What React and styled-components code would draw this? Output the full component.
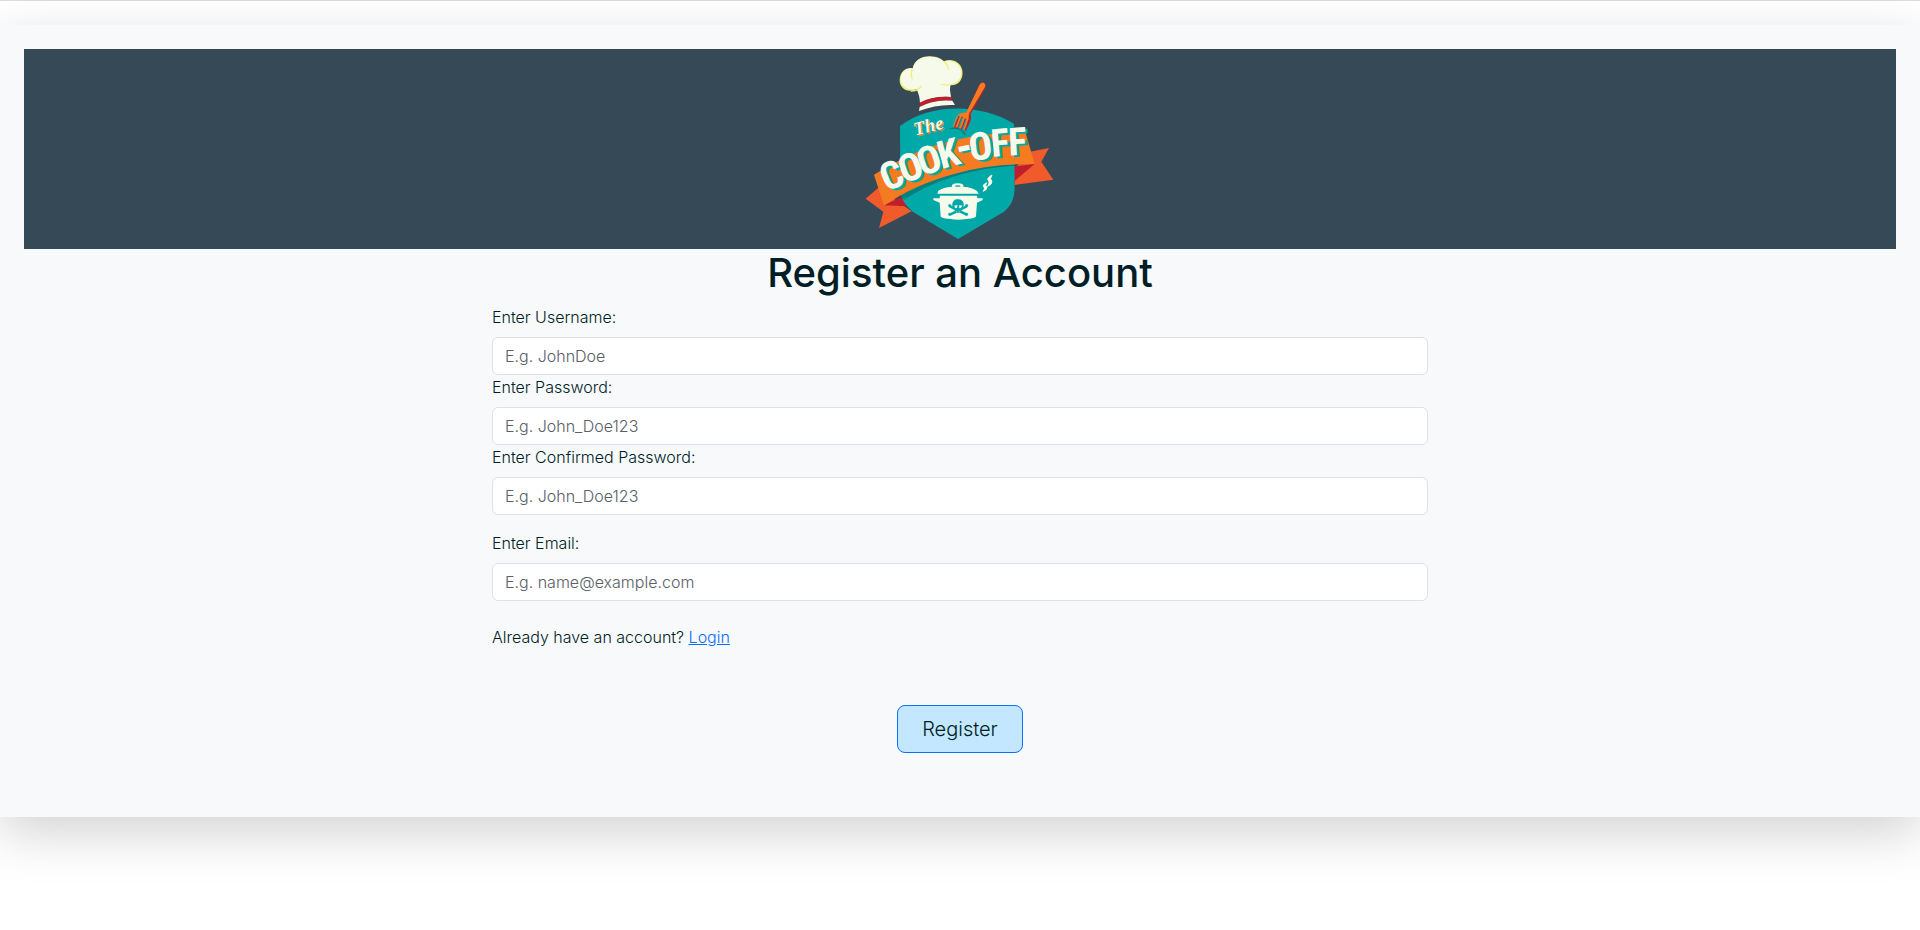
import React from 'react';
import styled, { createGlobalStyle } from 'styled-components';

const GlobalStyle = createGlobalStyle`
  *, *::before, *::after { box-sizing: border-box; }
  body {
    margin: 0;
    background: #fff;
    color: #001e26;
    font-family: Inter, sans-serif;
    font-size: 16px;
    font-weight: 300;
    line-height: 24px;
  }
`;

const Page = styled.div`
  min-height: 100vh;
  border-top: 1px solid #dcdcdc;
  padding-top: 24px;
`;

const Panel = styled.main`
  padding: 24px 24px 64px;
  background: #f8f9fb;
  box-shadow: 0 16px 48px rgba(0, 0, 0, 0.175);
`;

const Banner = styled.header`
  display: flex;
  justify-content: center;
  background: #364957;
`;

const Logo = styled.svg`
  display: block;
  width: 220px;
  height: 200px;
`;

const Title = styled.h1`
  margin: 0 0 8px;
  font-size: 40px;
  font-weight: 500;
  line-height: 48px;
  text-align: center;
`;

const Form = styled.form`
  display: flex;
  flex-direction: column;
  width: 50%;
  margin: 0 auto;
`;

const Field = styled.div`
  display: flex;
  flex-direction: column;
  gap: 8px;
  margin-top: ${(p) => (p.$spaced ? '16px' : '0')};
`;

const Label = styled.label`
  font-weight: 350;
`;

const Input = styled.input`
  width: 100%;
  height: 38px;
  padding: 6px 12px;
  border: 1px solid #dee2e6;
  border-radius: 6px;
  background: #fff;
  color: #212529;
  font: inherit;
  &::placeholder { color: #596067; opacity: 1; }
`;

const Prompt = styled.p`
  margin: 24px 0 56px;
  font-weight: 350;
`;

const Link = styled.a`
  color: #0d6efd;
`;

const Submit = styled.button`
  align-self: center;
  padding: 8px 24px;
  border: 1px solid #0d6efd;
  border-radius: 8px;
  background: #c2e7ff;
  color: #001e26;
  font: inherit;
  font-size: 20px;
  font-weight: 350;
  line-height: 30px;
`;

const Lettering = styled.text`
  font-family: 'Liberation Sans Narrow', 'Roboto Condensed', 'DejaVu Sans Condensed', sans-serif;
  font-size: ${(p) => (p.$dash ? '136px' : '116px')};
  font-weight: 700;
`;

const Script = styled.text`
  font-family: 'Liberation Serif', serif;
  font-size: 56px;
  font-style: italic;
  font-weight: 700;
`;

const letters = [
  ['C', 124, 388, -22],
  ['O', 180, 364, -20],
  ['O', 236, 342, -18],
  ['K', 294, 322, -15],
  ['-', 342, 308, -12],
  ['O', 391, 301, -7],
  ['F', 450, 291, -5],
  ['F', 502, 287, -3],
];

function Letters({ dx = 0, dy = 0, color }) {
  return letters.map(([ch, x, y, angle], i) => (
    <Lettering
      key={i}
      $dash={ch === '-'}
      textAnchor="middle"
      fill={color}
      transform={`translate(${x + dx} ${y + dy}) rotate(${angle})`}
      y="43"
    >
      {ch}
    </Lettering>
  ));
}

function CookOffLogo() {
  return (
    <Logo viewBox="0 12 660 600" role="img" aria-label="The Cook-Off">
      <path d="M47 461L85 428L185 499L87 549L100 500Z" fill="#f15a2b" />
      <path d="M540 320L597 309L574 350L610 404L494 420L494 370Z" fill="#f15a2b" />
      <path d="M100 481L170 450L170 484Z" fill="#be1e2d" />
      <path d="M490 365L554 357L494 408Z" fill="#be1e2d" />
      <path d="M150 243C240 174 390 174 492 236L494 430Q494 475 462 500L324 582L188 500Q150 470 151 425Z" fill="#00a9a7" />
      <path d="M150 445Q300 355 492 358V362Q300 374 162 464Z" fill="#00807e" />
      <path d="M72 389Q190 315 305 287Q420 260 527 264L554 357Q420 355 315 386Q190 420 102 482Z" fill="#f47b20" />
      <path d="M197 133C171 146 148 128 149 105C150 78 170 66 188 70C194 45 215 33 240 34C261 34 277 43 282 49C305 39 331 50 337 76C341 104 325 122 302 121L297 130Z" fill="#f1ee7c" />
      <path d="M199 131C173 139 151 122 152 101C154 80 170 67 188 71C193 46 214 34 240 35C262 35 276 44 281 50C301 43 326 52 333 74C337 99 321 117 301 117Q298 135 303 156Q252 152 210 174Q209 150 199 131Z" fill="#f6faeb" />
      <path d="M187 70Q181 90 187 103M281 49Q295 59 296 75M182 138Q204 138 215 123M272 117Q282 122 301 119" fill="none" stroke="#f1ee7c" strokeWidth="4" />
      <path d="M209 173Q251 151 304 156L306 167Q250 162 209 186Z" fill="#be1e2d" />
      <path d="M209 186Q250 162 307 167L315 180Q260 177 207 198Z" fill="#f6faeb" />
      <path d="M299 251Q333 243 346 270" fill="none" stroke="#00807e" strokeWidth="4" />
      <path d="M403 114Q411 121 406 130L362 207Q366 222 357 238L348 257L343 256L354 224L348 222L336 253L330 251L342 218L335 217L323 251L317 248L331 214L316 248L311 246L327 212Q336 205 352 200L386 121Q394 109 403 114Z" fill="#be1e2d" />
      <path d="M390 117Q399 108 405 117Q408 123 403 129L357 206Q358 221 351 235L344 255L340 253L350 222L345 220L333 251L328 249L340 217L334 215L322 248L317 246L329 213L324 211L312 246L309 244L320 214Q326 204 349 202Z" fill="#f47b20" />
      <Script x="199" y="275" fill="#f47b20" transform="rotate(-14 200 276)">The</Script>
      <Script x="196" y="271" fill="#f6faeb" transform="rotate(-14 197 272)">The</Script>
      <Letters dx={8} dy={5} color="#00a9a7" />
      <Letters color="#f6faeb" />
      <path d="M265 437Q280 427 306 425Q304 415 323 415Q342 415 340 425Q368 427 381 438L386 446H262ZM315 425H332Q332 421 323 421Q315 421 315 425Z" fill="#f6faeb" fillRule="evenodd" />
      <path d="M270 452H380L383 460H398V465L381 473L378 514Q376 522 324 524Q274 522 272 514L269 473L250 465V460H269Z" fill="#f6faeb" />
      <path d="M400 439Q407 426 400 425Q396 420 410 413Q404 424 411 425Q413 433 400 439ZM413 424Q421 410 414 405Q410 399 426 390Q418 404 426 408Q427 418 413 424Z" fill="#f6faeb" stroke="#f6faeb" strokeWidth="3" />
      <g fill="#00a9a7" stroke="#00a9a7">
        <path d="M300 484L350 509M350 484L300 509" strokeWidth="7" />
        <circle cx="299" cy="482" r="4" /><circle cx="350" cy="482" r="4" />
        <circle cx="299" cy="508" r="4" /><circle cx="350" cy="508" r="4" />
        <path d="M307 480Q308 463 324 463Q340 464 341 480L337 490L333 492V503H315V492L310 490Z" />
      </g>
      <path d="M314 482L322 481L320 489L315 488ZM328 481L336 482L333 488L328 489ZM320 497V507M328 497V507" fill="#f6faeb" stroke="#f6faeb" />
    </Logo>
  );
}

const fields = [
  { id: 'username', label: 'Enter Username:', hint: 'E.g. JohnDoe', type: 'text' },
  { id: 'password', label: 'Enter Password:', hint: 'E.g. John_Doe123', type: 'password' },
  { id: 'confirm', label: 'Enter Confirmed Password:', hint: 'E.g. John_Doe123', type: 'password' },
  { id: 'email', label: 'Enter Email:', hint: 'E.g. name@example.com', type: 'email', spaced: true },
];

export default function App() {
  return (
    <Page>
      <GlobalStyle />
      <Panel>
        <Banner><CookOffLogo /></Banner>
        <Title>Register an Account</Title>
        <Form onSubmit={(e) => e.preventDefault()}>
          {fields.map((f) => (
            <Field key={f.id} $spaced={f.spaced}>
              <Label htmlFor={f.id}>{f.label}</Label>
              <Input id={f.id} name={f.id} type={f.type} placeholder={f.hint} />
            </Field>
          ))}
          <Prompt>Already have an account? <Link href="#login">Login</Link></Prompt>
          <Submit type="submit">Register</Submit>
        </Form>
      </Panel>
    </Page>
  );
}
